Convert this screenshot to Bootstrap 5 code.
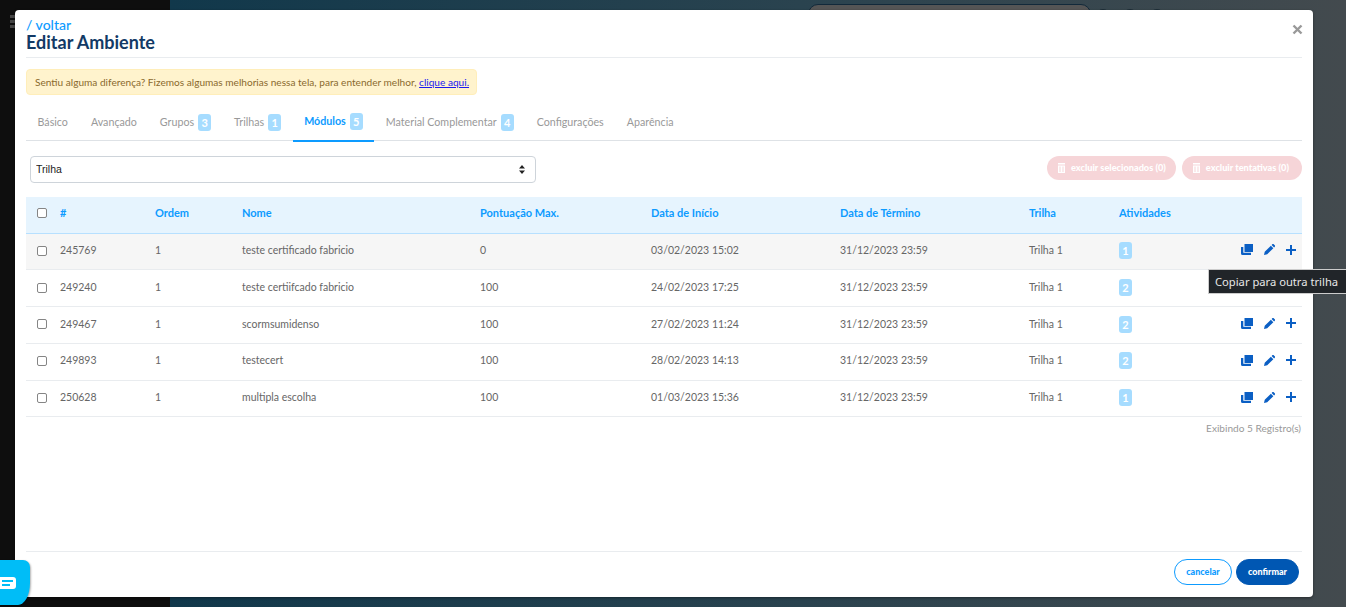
<!DOCTYPE html>
<html lang="pt">
<head>
<meta charset="utf-8">
<title>Editar Ambiente</title>
<link href="https://cdn.jsdelivr.net/npm/bootstrap@5.3.0/dist/css/bootstrap.min.css" rel="stylesheet">
<style>
html,body{height:607px;overflow:hidden}
body{position:relative;font-family:Lato,"Noto Sans",sans-serif;font-size:11px;color:#666;
 background:linear-gradient(90deg,#0e0e0e 0,#0e0e0e 170px,#11384b 170px,#2a434f 800px,#434a4e 1346px)}
.bg-burger{position:absolute;left:10px;top:15px;width:6px;height:13px;background:repeating-linear-gradient(180deg,#444 0,#444 3px,transparent 3px,transparent 5px)}
.bg-search{position:absolute;left:808px;top:4px;width:283px;height:20px;border-radius:10px;background:#555;border:1px solid #12293a}
.bg-dots{position:absolute;left:1096px;top:9px;gap:13px}
.bg-dots i{display:block;width:14px;height:14px;border-radius:50%;background:#1d2e38}
.sheet{position:absolute;left:15px;top:10px;width:1298px;height:587px;background:#fff;border-radius:4px;box-shadow:0 1px 3px rgba(0,0,0,.4);display:flex;flex-direction:column;padding:0 11px}
.head{height:48px;border-bottom:1px solid #e9ecef;padding-top:7px;position:relative}
.back{display:block;font-size:14px;line-height:16px;color:#0d9bff;text-decoration:none;font-weight:500}
.ttl{font-size:18px;line-height:20px;margin:-1px 0 0;font-weight:700;color:#123a66}
.closex{position:absolute;right:-1px;top:14px;width:11px;height:11px;padding:0;border:0;background:none;line-height:0}
.notice{margin:11px 0 0;height:26px;width:451px;padding:0 8px;background:#fff3cd;border:1px solid #ffeeba;border-radius:4px;font-size:10.1px;line-height:24px;color:#8a6a2e;white-space:nowrap}
.notice a{color:#1a1af0}
.tabbar{margin-top:14px;height:32px;border-bottom:1px solid #dee2e6;flex-wrap:nowrap}
.tabbar .nav-link{padding:0 11.5px 6px;height:32px;font-size:10.7px;color:#999;border-radius:0;white-space:nowrap;display:flex;align-items:center;gap:4px}
.tabbar .nav-link.active{color:#0d9bff;font-weight:700;border-bottom:2px solid #0d9bff;height:33px;padding-bottom:7px;background:none}
.cnt{display:inline-block;min-width:13px;height:17px;line-height:17px;text-align:center;border-radius:3px;background:#a6dcff;color:#fff;font-weight:700;font-size:11px}
.toolbar{margin-top:15px;height:41px;padding-left:4px}
.pick{width:506px;height:27px;font-family:"Liberation Sans",sans-serif;font-size:10.5px;padding:0 5px;color:#222;border-color:#ced4da;border-radius:4px;background-image:url("data:image/svg+xml,%3Csvg xmlns='http://www.w3.org/2000/svg' width='8' height='11' viewBox='0 0 8 11'%3E%3Cpath fill='%23222' d='M4 1l3 3.500H1zM4 10L1 6.500h6z'/%3E%3C/svg%3E");background-size:8px 11px;background-position:right 9px center}
.pill-del{height:24px;border:0;border-radius:12px;background:#f6d5d8;color:#fff;font-weight:900;font-size:9.2px;padding:0 10px 1px 11px;display:flex;align-items:center;gap:6px;white-space:nowrap}
.pill-del+.pill-del{padding-right:13px}
.grid-tbl{table-layout:fixed;width:1276px;margin:0;font-size:10.5px;color:#666}
.grid-tbl th{height:36px;background:#e6f4fe;color:#0d9bff;font-size:11px;font-weight:700;border-bottom:1px solid #b7e0ff;padding:0 0 3px;vertical-align:middle;box-shadow:none}
.grid-tbl td{height:36.8px;padding:0 0 1px;vertical-align:middle;border-bottom:1px solid #e9ecef;background:#fff;color:#666;box-shadow:none}
.grid-tbl tr.hot td{background:#f6f6f6}
.grid-tbl input{width:10px;height:10px;margin:0 0 0 11px;display:block;border:1px solid #858585;border-radius:2px;appearance:none;background:#fff}
.acts{display:flex;gap:11px;align-items:center;justify-content:flex-end;padding:0 6px 2px 0}
.acts svg{display:block}
.tot{margin-top:4px;padding-right:1px;text-align:right;font-size:10.1px;color:#999}
.foot{margin-top:auto;height:46px;border-top:1px solid #e9ecef;padding:7px 3px 0 0;gap:4px}
.btn-c,.btn-k{height:26px;border-radius:13px;font-size:9px;font-weight:900;padding:0;line-height:24px}
.btn-c{width:58px;background:#fff;border:1px solid #0d9bff;color:#0d9bff}
.btn-k{width:63px;background:#0057b3;border:1px solid #0057b3;color:#fff}
.hint{position:absolute;left:1208px;top:269px;width:138px;height:25px;background:#212529;border:1px solid #ccc;border-right:0;color:#e8e8e8;font-family:"Noto Sans",sans-serif;font-size:11.2px;line-height:23px;padding-left:6px;white-space:nowrap}
.chat{position:absolute;left:0;top:560px;width:30px;height:45px;background:#00bdf7;border-radius:0 7px 12px 0/0 7px 22px 0;box-shadow:1px 1px 2px rgba(0,0,0,.3)}
.chat svg{position:absolute;left:0;top:17px}
</style>
</head>
<body>
<div class="bg-burger"></div>
<div class="bg-search"></div>
<div class="bg-dots d-flex"><i></i><i></i><i></i></div>
<main class="sheet">
  <div class="head">
    <a class="back" href="#">/ voltar</a>
    <h1 class="ttl">Editar Ambiente</h1>
    <button class="closex" aria-label="Fechar"><svg width="11" height="11" viewBox="0 0 11 11"><path d="M1.5 1.5l8 8M9.500 1.500l-8 8" stroke="#999" stroke-width="2.400"/></svg></button>
  </div>
  <div class="notice">Sentiu alguma diferença? Fizemos algumas melhorias nessa tela, para entender melhor, <a href="#">clique aqui.</a></div>
  <ul class="nav tabbar">
    <li class="nav-item"><a class="nav-link" href="#">Básico</a></li>
    <li class="nav-item"><a class="nav-link" href="#">Avançado</a></li>
    <li class="nav-item"><a class="nav-link" href="#">Grupos <span class="cnt">3</span></a></li>
    <li class="nav-item"><a class="nav-link" href="#">Trilhas <span class="cnt">1</span></a></li>
    <li class="nav-item"><a class="nav-link active" href="#">Módulos <span class="cnt">5</span></a></li>
    <li class="nav-item"><a class="nav-link" href="#">Material Complementar <span class="cnt">4</span></a></li>
    <li class="nav-item"><a class="nav-link" href="#">Configurações</a></li>
    <li class="nav-item"><a class="nav-link" href="#">Aparência</a></li>
  </ul>
  <div class="toolbar d-flex justify-content-between align-items-start">
    <select class="form-select pick"><option>Trilha</option></select>
    <div class="d-flex" style="gap:6px">
      <button class="pill-del" disabled><svg width="7" height="10" viewBox="0 0 7 10"><path fill="#fff" d="M0 0h7v1.500H0zM0 2.500h7V10H0zM1.500 3.500V9h1V3.500zM4.500 3.500V9h1V3.500z" fill-rule="evenodd"/></svg>excluir selecionados (0)</button>
      <button class="pill-del" disabled><svg width="7" height="10" viewBox="0 0 7 10"><path fill="#fff" d="M0 0h7v1.500H0zM0 2.500h7V10H0zM1.500 3.500V9h1V3.500zM4.500 3.500V9h1V3.500z" fill-rule="evenodd"/></svg>excluir tentativas (0)</button>
    </div>
  </div>
  <table class="table grid-tbl">
    <colgroup><col style="width:34px"><col style="width:95px"><col style="width:87px"><col style="width:238px"><col style="width:171px"><col style="width:189px"><col style="width:189px"><col style="width:90px"><col style="width:90px"><col></colgroup>
    <thead><tr><th><input type="checkbox" aria-label="Todos"></th><th>#</th><th>Ordem</th><th>Nome</th><th>Pontuação Max.</th><th>Data de Início</th><th>Data de Término</th><th>Trilha</th><th>Atividades</th><th></th></tr></thead>
    <tbody id="linhas"></tbody>
  </table>
  <div class="tot">Exibindo 5 Registro(s)</div>
  <div class="foot d-flex justify-content-end">
    <button class="btn btn-c">cancelar</button>
    <button class="btn btn-k">confirmar</button>
  </div>
</main>
<div class="hint">Copiar para outra trilha</div>
<div class="chat"><svg width="16" height="12" viewBox="0 0 16 12"><rect x="-4" y="0" width="20" height="12" rx="3" fill="#fff"/><rect x="2" y="3" width="11" height="2" fill="#00bdf7"/><rect x="2" y="7" width="8" height="2" fill="#00bdf7"/></svg></div>
<script>
const ic='<div class="acts"><svg width="12" height="11" viewBox="0 0 12 11"><path fill="#0b5fc4" d="M3.500 0h8.500v8H3.500z"/><path fill="#0b5fc4" d="M0 3h2.300v5.700H10V11H1.500Q0 11 0 9.500z"/></svg><svg width="11" height="11" viewBox="0 0 12 12"><path fill="#0b5fc4" d="M0 12l.8-3.500L7.500 1.800l2.700 2.700L3.500 11.200zM8.300 1l1-1q.5-.3 1 0l1.700 1.700q.3.500 0 1l-1 1z"/></svg><svg width="10" height="10" viewBox="0 0 10 10"><path fill="#0b5fc4" d="M4 0h2v4h4v2H6v4H4V6H0V4h4z"/></svg></div>';
const d=[[245769,'teste certificado fabricio',0,'03/02/2023 15:02',1,1],[249240,'teste certiifcado fabricio',100,'24/02/2023 17:25',2,0],[249467,'scormsumidenso',100,'27/02/2023 11:24',2,1],[249893,'testecert',100,'28/02/2023 14:13',2,1],[250628,'multipla escolha',100,'01/03/2023 15:36',1,1]];
document.getElementById('linhas').innerHTML=d.map((r,i)=>`<tr class="${i==0?'hot':''}"><td><input type="checkbox" aria-label="Selecionar"></td><td>${r[0]}</td><td>1</td><td>${r[1]}</td><td>${r[2]}</td><td>${r[3]}</td><td>31/12/2023 23:59</td><td>Trilha 1</td><td><span class="cnt">${r[4]}</span></td><td>${r[5]?ic:''}</td></tr>`).join('');
</script>
<script src="https://cdn.jsdelivr.net/npm/bootstrap@5.3.0/dist/js/bootstrap.bundle.min.js"></script>
</body>
</html>
